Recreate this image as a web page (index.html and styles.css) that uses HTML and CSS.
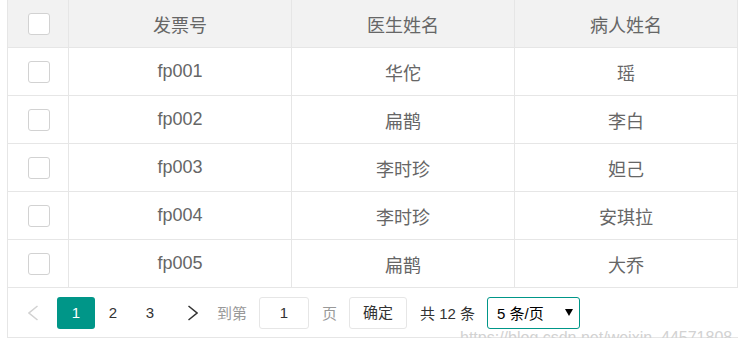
FILE: index.html
```html
<!doctype html>
<html lang="zh-CN">
<head>
    <meta charset="UTF-8">
    <title>发票列表</title>
    <link rel="stylesheet" href="styles.css">
</head>
<body>
<div class="table-box">
    <div class="grid">
        <div class="cell head"><span class="checkbox"></span></div>
        <div class="cell head">发票号</div>
        <div class="cell head">医生姓名</div>
        <div class="cell head">病人姓名</div>

        <div class="cell"><span class="checkbox"></span></div>
        <div class="cell">fp001</div>
        <div class="cell">华佗</div>
        <div class="cell">瑶</div>

        <div class="cell"><span class="checkbox"></span></div>
        <div class="cell">fp002</div>
        <div class="cell">扁鹊</div>
        <div class="cell">李白</div>

        <div class="cell"><span class="checkbox"></span></div>
        <div class="cell">fp003</div>
        <div class="cell">李时珍</div>
        <div class="cell">妲己</div>

        <div class="cell"><span class="checkbox"></span></div>
        <div class="cell">fp004</div>
        <div class="cell">李时珍</div>
        <div class="cell">安琪拉</div>

        <div class="cell"><span class="checkbox"></span></div>
        <div class="cell">fp005</div>
        <div class="cell">扁鹊</div>
        <div class="cell">大乔</div>
    </div>

    <!-- pager -->
    <div class="pager">
        <a class="page-prev">
            <svg width="10" height="16" viewBox="0 0 10 16"><path d="M9.5 1 L1 8 L9.5 15" fill="none" stroke="#d2d2d2" stroke-width="1.5"/></svg>
        </a>
        <a class="page-num current">1</a>
        <a class="page-num two">2</a>
        <a class="page-num three">3</a>
        <a class="page-next">
            <svg width="10" height="16" viewBox="0 0 10 16"><path d="M0.5 1 L9 8 L0.5 15" fill="none" stroke="#333" stroke-width="1.5"/></svg>
        </a>
        <span class="skip-label">到第</span>
        <span class="skip-input">1</span>
        <span class="skip-unit">页</span>
        <span class="skip-btn">确定</span>
        <span class="count">共 12 条</span>
        <span class="limits">5 条/页<i class="caret"></i></span>
    </div>

    <div class="watermark">https://blog.csdn.net/weixin_44571808</div>
</div>
</body>
</html>
```

FILE: styles.css
```css
body {
    margin: 0;
    background: #fff;
    font-family: "Liberation Sans", "Noto Sans CJK SC", sans-serif;
}

/* table wrapper */
.table-box {
    position: relative;
    width: 731px;
    margin-left: 7px;
    border-left: 1px solid #e6e6e6;
    border-bottom: 1px solid #e6e6e6;
    box-sizing: border-box;
}

.grid {
    display: grid;
    grid-template-columns: 61px 223px 223px 223px;
    grid-auto-rows: 48px;
}

.cell {
    display: flex;
    align-items: center;
    justify-content: center;
    border-right: 1px solid #e6e6e6;
    border-bottom: 1px solid #e6e6e6;
    box-sizing: border-box;
    font-size: 18px;
    color: #666;
}

.cell.head {
    background: #f2f2f2;
}

.checkbox {
    display: block;
    width: 22px;
    height: 22px;
    border: 1px solid #d2d2d2;
    border-radius: 3px;
    background: #fff;
    box-sizing: border-box;
    margin-left: 1px;
}

/* pager bar */
.pager {
    display: flex;
    align-items: center;
    height: 49px;
    font-size: 15px;
    color: #333;
}

.pager a {
    display: flex;
    align-items: center;
    height: 32px;
}

.page-prev {
    width: 49px;
    padding-left: 20px;
    box-sizing: border-box;
}

.page-next {
    width: 48px;
    padding-left: 19px;
    box-sizing: border-box;
}

.page-num {
    justify-content: center;
}

.page-num.current {
    width: 38px;
    background: #009688;
    color: #fff;
    border-radius: 3px;
}

.page-num.two {
    width: 36px;
}

.page-num.three {
    width: 38px;
}

.skip-label,
.skip-unit {
    color: #999;
}

.skip-input {
    width: 50px;
    height: 32px;
    margin-left: 12px;
    line-height: 30px;
    text-align: center;
    border: 1px solid #e6e6e6;
    border-radius: 3px;
    box-sizing: border-box;
}

.skip-unit {
    margin-left: 13px;
}

.skip-btn {
    width: 58px;
    height: 32px;
    margin-left: 12px;
    line-height: 30px;
    text-align: center;
    border: 1px solid #e6e6e6;
    border-radius: 3px;
    box-sizing: border-box;
}

.count {
    margin-left: 13px;
}

.limits {
    display: flex;
    align-items: center;
    width: 93px;
    height: 32px;
    margin-left: 12px;
    padding-left: 9px;
    border: 1px solid #009688;
    border-radius: 3px;
    box-sizing: border-box;
    color: #000;
}

.caret {
    width: 0;
    height: 0;
    margin-left: 21px;
    border-left: 4px solid transparent;
    border-right: 4px solid transparent;
    border-top: 7px solid #000;
}

.watermark {
    position: absolute;
    left: 452px;
    top: 329px;
    font-size: 16px;
    color: #d2d2d2;
    white-space: nowrap;
}
```
